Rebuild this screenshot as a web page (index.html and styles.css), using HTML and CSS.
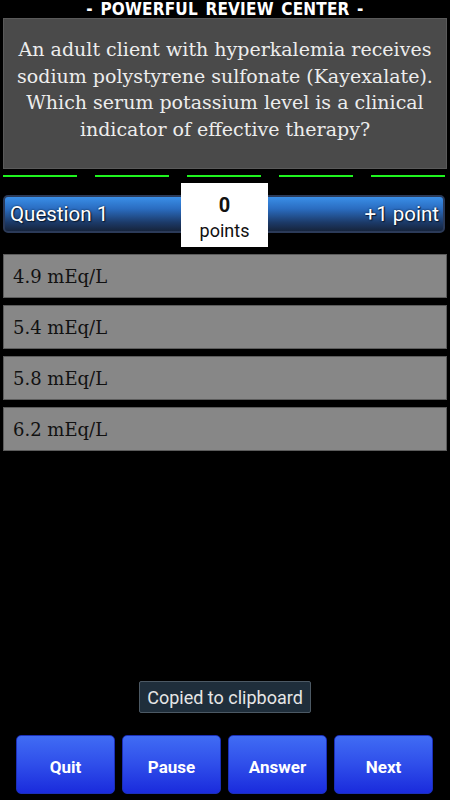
FILE: index.html
```html
<!DOCTYPE html>
<html lang="en">
<head>
<meta charset="utf-8">
<title>Powerful Review Center</title>
<link rel="stylesheet" href="styles.css">
</head>
<body>
<div class="screen">
  <header class="title">- POWERFUL REVIEW CENTER -</header>
  <section class="question">
    <p>An adult client with hyperkalemia receives sodium polystyrene sulfonate (Kayexalate). Which serum potassium level is a clinical indicator of effective therapy?</p>
  </section>
  <div class="progress">
    <span class="seg"></span><span class="seg"></span><span class="seg"></span><span class="seg"></span><span class="seg"></span>
  </div>
  <div class="score-row">
    <div class="qbar">
      <span class="qnum">Question 1</span>
      <span class="qpts">+1 point</span>
    </div>
    <div class="score">
      <span class="score-num">0</span>
      <span class="score-lbl">points</span>
    </div>
  </div>
  <ul class="options">
    <li class="option">4.9 mEq/L</li>
    <li class="option">5.4 mEq/L</li>
    <li class="option">5.8 mEq/L</li>
    <li class="option">6.2 mEq/L</li>
  </ul>
  <div class="spacer"></div>
  <div class="toast-wrap"><div class="toast">Copied to clipboard</div></div>
  <nav class="actions">
    <button class="btn">Quit</button>
    <button class="btn">Pause</button>
    <button class="btn">Answer</button>
    <button class="btn">Next</button>
  </nav>
</div>
</body>
</html>
```
FILE: styles.css
```css
* { box-sizing: border-box; }
html, body { margin: 0; padding: 0; background: #000; }
.screen {
  width: 450px;
  height: 800px;
  display: flex;
  flex-direction: column;
  background: #000;
  overflow: hidden;
}
.title {
  height: 18px;
  text-align: center;
  color: #fff;
  font-family: "DejaVu Sans Condensed", "DejaVu Sans", sans-serif;
  font-stretch: condensed;
  font-weight: bold;
  font-size: 17px;
  line-height: 18px;
  letter-spacing: 0.2px;
  word-spacing: 2px;
}
.question {
  margin: 0 3px;
  height: 151px;
  background: #4a4a4a;
  border: 1px solid #5a5a5a;
  padding: 17px 10px 0;
}
.question p {
  margin: 0;
  text-align: center;
  color: #ededed;
  font-family: "DejaVu Serif", "Liberation Serif", serif;
  font-size: 19px;
  line-height: 26.7px;
}
.progress {
  margin: 6px 3px 0;
  display: flex;
  gap: 18px;
  height: 2px;
}
.seg {
  width: 74px;
  height: 2px;
  background: #1ff41f;
}
.score-row {
  position: relative;
  margin-top: 6px;
  height: 64px;
  padding-top: 12px;
}
.qbar {
  margin: 0 5px 0 3px;
  height: 38px;
  border: 2px solid #2b3a58;
  border-radius: 5px;
  background: linear-gradient(to bottom, #3a8fe8 0%, #2a6cc0 35%, #1c3a68 75%, #16243c 100%);
  display: flex;
  align-items: center;
  justify-content: space-between;
  padding: 0 4px 0 5px;
  font-family: Roboto, "Noto Sans", sans-serif;
  font-size: 20.5px;
  color: #fff;
  text-shadow: 0 0 2px #0a1a30, 1px 1px 1px #0a1a30;
}
.score {
  position: absolute;
  left: 181px;
  top: 0;
  width: 87px;
  height: 64px;
  background: #fff;
  display: flex;
  flex-direction: column;
  align-items: center;
  padding-top: 10px;
  font-family: Roboto, "Noto Sans", sans-serif;
  color: #111;
}
.score-num {
  font-weight: bold;
  font-size: 20px;
  line-height: 25px;
}
.score-lbl {
  font-size: 18px;
  line-height: 25px;
}
.options {
  list-style: none;
  margin: 7px 3px 0;
  padding: 0;
  display: flex;
  flex-direction: column;
  gap: 7px;
}
.option {
  height: 44px;
  background: #878787;
  border: 1px solid #5c5c5c;
  display: flex;
  align-items: center;
  padding-left: 9px;
  font-family: "DejaVu Serif", "Liberation Serif", serif;
  font-size: 18px;
  color: #111;
}
.spacer { flex: 1; }
.toast-wrap {
  display: flex;
  justify-content: center;
}
.toast {
  height: 32px;
  padding: 0 7px;
  background: #1f2e3b;
  border: 1px solid #4c5964;
  border-radius: 2px;
  display: flex;
  align-items: center;
  font-family: Roboto, "Noto Sans", sans-serif;
  font-size: 18px;
  color: #e6e6e6;
}
.actions {
  margin: 22px 17px 6px 16px;
  display: grid;
  grid-template-columns: repeat(4, 1fr);
  gap: 7px;
}
.btn {
  height: 59px;
  border: 1px solid #1b2fb8;
  border-radius: 5px;
  background: linear-gradient(to bottom, #406cf4 0%, #2f4eea 50%, #1a2bdc 100%);
  color: #fff;
  font-family: Roboto, "Noto Sans", sans-serif;
  font-weight: bold;
  font-size: 17px;
  padding: 5px 0 0;
}
```
